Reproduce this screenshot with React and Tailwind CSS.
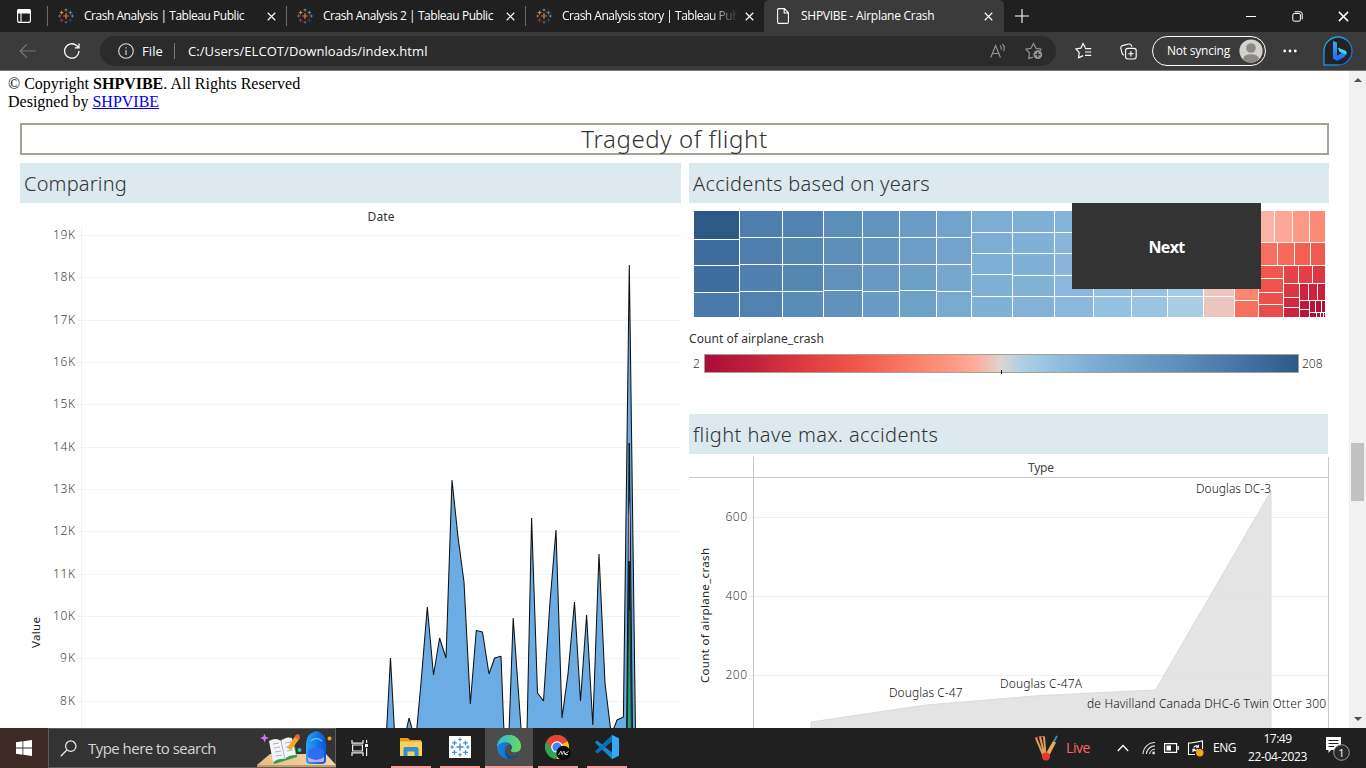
import React from "react";

const TABLEAU_MARKS = [
  [8, 8, 2.9, "#e8762d", 1.2],
  [3.6, 4.6, 1.9, "#eb9129", 1],
  [12.4, 4.6, 1.9, "#5b879b", 1],
  [3.6, 12.2, 1.9, "#c72037", 1],
  [12.4, 12.2, 1.9, "#1f457e", 1],
  [8, 2, 1.5, "#7099a5", 0.9],
  [8, 14.2, 1.5, "#5b6591", 0.9],
  [1.7, 8, 1.5, "#59879b", 0.9],
  [14.3, 8, 1.5, "#7b7fb0", 0.9],
];

function TableauMark({ className = "", mono }) {
  return (
    <svg viewBox="0 0 16 16" className={className} fill="none">
      {TABLEAU_MARKS.map(([x, y, r, color, w], i) => (
        <path key={i} d={`M${x - r} ${y}H${x + r}M${x} ${y - r}V${y + r}`} stroke={mono || color} strokeWidth={w} />
      ))}
    </svg>
  );
}

function CloseIcon({ className = "size-[9px]" }) {
  return (
    <svg viewBox="0 0 10 10" className={className} stroke="#fff" strokeWidth="1.3" fill="none">
      <path d="M.8.8L9.2 9.2M9.2.8L.8 9.2" />
    </svg>
  );
}

function Tab({ title, tracking, fade }) {
  return (
    <div className="mt-[6px] flex h-5 w-[239px] items-center border-l border-[#6a6a6a] pl-[10px]">
      <TableauMark className="size-4 shrink-0" />
      <span
        className={`ml-[10px] w-[180px] overflow-hidden whitespace-nowrap text-[12px] leading-4 text-white ${tracking} ${
          fade ? "[mask-image:linear-gradient(to_right,#000_82%,transparent_98%)]" : ""
        }`}
      >
        {title}
      </span>
      <CloseIcon className="ml-[3px] size-[9px]" />
    </div>
  );
}

function TabStrip() {
  return (
    <div className="flex h-8 bg-[#202020]">
      <div className="flex w-[47px] items-center pl-[17px]">
        <svg viewBox="0 0 14 14" className="size-[14px]" fill="none" stroke="#fff" strokeWidth="1.1">
          <rect x=".6" y=".6" width="12.8" height="12.8" rx="2" />
          <path d="M.6 1.5Q.6.6 2 .6H12Q13.4.6 13.4 2V4H.6Z" fill="#fff" />
          <path d="M4 4V13.4" />
        </svg>
      </div>
      <Tab title="Crash Analysis | Tableau Public" tracking="tracking-[-0.47px]" />
      <Tab title="Crash Analysis 2 | Tableau Public" tracking="tracking-[-0.44px]" />
      <Tab title="Crash Analysis story | Tableau Public" tracking="tracking-[-0.5px]" fade />
      <div className="flex w-[240px] items-center rounded-t-[5px] bg-[#3b3b3b] pl-[13px]">
        <svg viewBox="0 0 12 16" className="h-4 w-3" fill="none" stroke="#fff" strokeWidth="1.1">
          <path d="M2 .6H7.400L11.400 4.800V14Q11.400 15.400 10 15.400H2Q.6 15.400.6 14V2Q.6.6 2 .6ZM7.200.8V5H11.200" />
        </svg>
        <span className="ml-[12px] w-[183px] whitespace-nowrap text-[12px] leading-4 tracking-[-0.26px] text-white">
          SHPVIBE - Airplane Crash
        </span>
        <CloseIcon />
      </div>
      <div className="flex flex-1 items-center pl-[11px]">
        <svg viewBox="0 0 14 14" className="size-[14px]" stroke="#fff" strokeWidth="1.1">
          <path d="M7 0V14M0 7H14" />
        </svg>
      </div>
      <div className="flex items-center pr-[17px]">
        <svg viewBox="0 0 10 10" className="mr-[36px] size-[10px]" stroke="#fff" strokeWidth="1">
          <path d="M0 5.5H10" />
        </svg>
        <svg viewBox="0 0 11 11" className="mr-[35px] size-[11px]" fill="none" stroke="#fff" strokeWidth="1">
          <rect x=".8" y="2.5" width="7.6" height="7.7" rx="1.4" />
          <path d="M2.6.8H8Q10.2.8 10.2 3V8.4" />
        </svg>
        <CloseIcon className="size-[11px]" />
      </div>
    </div>
  );
}

function Toolbar() {
  return (
    <div className="flex h-[39px] items-center border-b border-[#777] bg-[#3b3b3b]">
      <svg viewBox="0 0 18 16" className="ml-[19px] h-4 w-[18px]" fill="none" stroke="#777" strokeWidth="1.2">
        <path d="M17 8H1.5M8 1.2L1.2 8L8 14.8" />
      </svg>
      <svg viewBox="0 0 16 16" className="ml-[27px] size-4" fill="none" stroke="#fff" strokeWidth="1.3">
        <path d="M15 8A7.2 7.2 0 1 1 12.6 2.6L14.8 4.6M15 .6V4.8H10.8" />
      </svg>
      <div className="ml-5 flex h-[30px] w-[956px] items-center rounded-full bg-[#2b2b2b] pl-[18px] pr-[13px] text-white">
        <svg viewBox="0 0 16 16" className="size-4" fill="none" stroke="#ddd" strokeWidth="1.1">
          <circle cx="8" cy="8" r="7.3" />
          <path d="M8 7V12M8 4.2V5.6" />
        </svg>
        <span className="ml-2 w-8 text-[13px] leading-4 tracking-[0.1px]">File</span>
        <span className="h-4 w-px bg-[#777]" />
        <span className="ml-[13px] text-[13px] leading-4 tracking-[0.07px]">C:/Users/ELCOT/Downloads/index.html</span>
        <svg viewBox="0 0 16 16" className="ml-auto size-4" fill="none" stroke="#999" strokeWidth="1.1">
          <path d="M.8 14.5L5.6 2.5L10.4 14.5M2.5 10.5H8.8M10 2.4Q11.800 4 11 6.600M12.400.8Q15.400 3.800 13.600 8" />
        </svg>
        <svg viewBox="0 0 18 18" className="ml-[19px] size-[18px]" fill="none" stroke="#999" strokeWidth="1.1">
          <path d="M8 15.2L3.8 16.4L4.4 11L1 7.2L6 6.2L8.5 1.5L11 6.2L16 7.2L15 8.6" />
          <circle cx="12.8" cy="12.6" r="4.4" fill="#999" stroke="none" />
          <path d="M12.8 10V15.2M10.2 12.6H15.4" stroke="#2b2b2b" strokeWidth="1.3" />
        </svg>
      </div>
      <svg viewBox="0 0 18 18" className="ml-[19px] size-[18px]" fill="none" stroke="#fff" strokeWidth="1.2">
        <path d="M10.4 5.8L8 1.5L5.8 6.2L1 7L4.2 10.6L3.6 15.8L8.2 13.6M10 6.6H16.2M10 10H16.2M10 13.4H16.2" />
      </svg>
      <svg viewBox="0 0 17 17" className="ml-[27px] size-[17px]" fill="none" stroke="#fff" strokeWidth="1.1">
        <rect x="5.6" y="5.4" width="10.6" height="10.6" rx="2.2" />
        <path d="M10.900 8V13.400M8.200 10.700H13.600M4 12.200Q2.400 11.600 2 10L.8 5.200Q.6 3.200 2.400 2.600L8.600 1Q10.800.6 11.600 2.800L12 3.800" />
      </svg>
      <div className="ml-[15px] flex h-[30px] w-[114px] items-center justify-end rounded-full border border-white pr-[2px]">
        <span className="mr-[9px] whitespace-nowrap text-[12px] leading-4 tracking-[-0.22px] text-white">Not syncing</span>
        <svg viewBox="0 0 24 24" className="size-6">
          <clipPath id="avatar"><circle cx="12" cy="12" r="11.4" /></clipPath>
          <circle cx="12" cy="12" r="11.6" fill="#d5d2ce" />
          <circle cx="12" cy="9" r="4.8" fill="#8d8985" />
          <ellipse cx="12" cy="20" rx="8" ry="4.8" fill="#8d8985" clipPath="url(#avatar)" />
        </svg>
      </div>
      <svg viewBox="0 0 14 4" className="ml-[17px] h-1 w-[14px]" fill="#fff">
        <circle cx="1.7" cy="2" r="1.4" /><circle cx="7" cy="2" r="1.4" /><circle cx="12.3" cy="2" r="1.4" />
      </svg>
      <svg viewBox="0 0 32 32" className="ml-[25px] size-8">
        <defs>
          <linearGradient id="bing" x1="0" x2="1" y1="0" y2="1"><stop stopColor="#20b6e8" /><stop offset="1" stopColor="#1e5fe0" /></linearGradient>
          <linearGradient id="bb" x1="0" x2="0" y1="0" y2="1"><stop stopColor="#35a8f8" /><stop offset="1" stopColor="#2469ee" /></linearGradient>
        </defs>
        <path d="M2 30V16A14 14 0 1 1 16 30Z" fill="#232323" stroke="url(#bing)" strokeWidth="1.3" />
        <path d="M11 6L15 7.6V20.5L20 18L17.5 16.8L16 12.8L24 16Q25.6 20 21.5 22.4L15 26L11 23.5Z" fill="url(#bb)" />
        <path d="M16 12.8L24 16Q25 18.2 24.4 19.6L17.5 16.8Z" fill="#3bd5f5" />
      </svg>
    </div>
  );
}

const GRID_LEFT = [235, 277, 320, 362, 404, 447, 489, 531, 574, 616, 658, 701];

function ComparingChart() {
  return (
    <svg viewBox="20 203 661 525" className="block h-[525px] w-[661px] font-['Noto_Sans',sans-serif]">
      <g shapeRendering="crispEdges" fill="#f2f2f2">
        {GRID_LEFT.map((y) => <rect key={y} x="77" y={y} width="604" height="1" />)}
        <rect x="81" y="226" width="1" height="502" />
      </g>
      <g fontSize="12" fontWeight="300" fill="#444">
        {GRID_LEFT.map((y, i) => (
          <text key={y} x={i < 10 ? 53 : 60} y={y + 4} textLength={i < 10 ? 22 : 15}>{`${19 - i}K`}</text>
        ))}
      </g>
      <text x="367.5" y="221" fontSize="12" textLength="27" fill="#333">Date</text>
      <text transform="translate(40 648) rotate(-90)" fontSize="11.5" textLength="31" fill="#222">Value</text>
      <path
        d="M386.5 732L390.5 658L394.5 732L406 732L409 718L413 732L416.5 732L421 683L427.3 607L433.5 675L439.6 638L446 658L452 480L458 537L464 582L470.3 704L476.3 630.5L482.5 632L489 674L494.6 658L501 656.3L504 732L509 732L513.2 618L521 728L527 732L531.6 518L537.5 693L543.5 701L550 602L556 530L562 718L568 674L574.5 602L580.5 701L586.6 615L592.8 725L599 554L605 683L610.7 730L614 728L617 720L623.4 717L629.3 265L635.5 732Z"
        fill="#6cace4" stroke="#111" strokeWidth="1.05" strokeLinejoin="bevel"
      />
      <path d="M626.6 732L629.3 443L632.5 732Z" fill="#355878" stroke="#111" strokeWidth="1" strokeLinejoin="bevel" />
      <path d="M628.6 562V516L629.3 500L630 516V562Z" fill="#c99aae" />
      <path d="M627.300 732L629.300 561L631.400 732Z" fill="#2ba07f" stroke="#111" strokeWidth=".7" strokeLinejoin="bevel" />
      <path d="M629.300 443V490M629.300 561V610" stroke="#111" strokeWidth="1" />
    </svg>
  );
}

/* [x0, x1, [[y0, y1, fill], ...]]: x1 is the gutter column, y1 the last filled row */
const TREEMAP = [
  [694, 739, [[211, 238, "#2c5985"], [240, 264, "#3e6b9d"], [266, 291, "#3f6d9f"], [293, 316, "#4a7aac"]]],
  [740, 782, [[211, 236, "#4e7dae"], [238, 263, "#4e7dae"], [265, 290, "#5080b0"], [292, 316, "#5181b1"]]],
  [783, 823, [[211, 236, "#5282b1"], [238, 263, "#5486b2"], [265, 290, "#5486b2"], [292, 316, "#5a8cb8"]]],
  [824, 862, [[211, 236, "#5c8eba"], [238, 263, "#5c8eba"], [265, 289, "#5f91bb"], [291, 316, "#6092bb"]]],
  [863, 899, [[211, 236, "#6293bd"], [238, 263, "#6596c0"], [265, 290, "#6999c3"], [292, 316, "#6a9bc4"]]],
  [900, 936, [[211, 236, "#6b9cc6"], [238, 263, "#6c9dc6"], [265, 289, "#6da0c7"], [291, 316, "#6ea1c8"]]],
  [937, 971, [[211, 236, "#73a3cc"], [238, 263, "#73a3cc"], [265, 290, "#76a7cf"], [292, 316, "#78a9d0"]]],
  [972, 1012, [[211, 231, "#7dacd4"], [233, 252, "#7dacd4"], [254, 273, "#7eafd5"], [275, 295, "#7eafd5"], [297, 316, "#7fb0d5"]]],
  [1013, 1054, [[211, 231, "#7fafd4"], [233, 252, "#80b0d5"], [254, 274, "#80b0d5"], [276, 295, "#82b1d6"], [297, 316, "#83b1d7"]]],
  [1055, 1093, [[211, 231, "#86b3d9"], [233, 252, "#88b4da"], [254, 274, "#8ab5db"], [276, 295, "#8cb7dc"], [297, 316, "#8cb8dc"]]],
  [1094, 1131, [[211, 295, "#93bfe0"], [297, 316, "#95c1e1"]]],
  [1132, 1167, [[211, 295, "#97c2e2"], [297, 316, "#99c4e2"]]],
  [1168, 1203, [[211, 295, "#a4cae4"], [297, 316, "#abcde4"]]],
  [1204, 1234, [[211, 295, "#ecc6be"], [297, 316, "#eac6be"]]],
  [1235, 1258, [[211, 299, "#fb8771"], [301, 316, "#f7705f"]]],
  [1240, 1274, [[211, 241, "#f9b4a8"]]],
  [1275, 1292, [[211, 241, "#ffa699"]]],
  [1293, 1309, [[211, 241, "#fe9784"]]],
  [1310, 1325, [[211, 241, "#fb8a77"]]],
  [1259, 1277, [[243, 264, "#f7705f"]]],
  [1278, 1294, [[243, 264, "#f56a58"]]],
  [1295, 1310, [[243, 264, "#f26052"]]],
  [1311, 1325, [[243, 264, "#ef5c4f"]]],
  [1259, 1283, [[266, 277, "#f0584d"], [279, 291, "#ef544c"], [293, 303, "#ed504a"], [305, 316, "#ea4c49"]]],
  [1284, 1298, [[266, 282, "#e34246"]]],
  [1299, 1312, [[266, 282, "#e24046"]]],
  [1313, 1325, [[266, 282, "#dd3742"]]],
  [1284, 1299, [[284, 296, "#dc3643"], [298, 306, "#d02a3e"], [308, 316, "#cd263c"]]],
  [1300, 1308, [[284, 299, "#cd243b"]]],
  [1309, 1317, [[284, 299, "#cc223b"]]],
  [1318, 1325, [[284, 299, "#c8203a"]]],
  [1300, 1309, [[301, 308, "#bf1738"], [310, 316, "#bb1437"]]],
  [1310, 1315, [[301, 311, "#b91336"]]],
  [1316, 1321, [[301, 311, "#b51136"]]],
  [1322, 1325, [[301, 311, "#b21036"]]],
  [1310, 1316, [[313, 316, "#b00f35"]]],
  [1317, 1320, [[313, 316, "#b00f35"]]],
  [1321, 1323, [[313, 316, "#ae0e35"]]],
  [1324, 1325, [[313, 316, "#ac0d34"]]],
];

function Treemap() {
  return (
    <svg viewBox="689 203 640 122" className="block h-[122px] w-[640px]" shapeRendering="crispEdges">
      {TREEMAP.flatMap(([x0, x1, cells]) =>
        cells.map(([y0, y1, fill]) => (
          <rect key={`${x0}-${y0}`} x={x0} y={y0} width={x1 - x0} height={y1 - y0 + 1} fill={fill} />
        ))
      )}
    </svg>
  );
}

function Legend() {
  return (
    <div className="h-[89px] pt-[6px] font-['Noto_Sans',sans-serif] text-[12px] text-[#333]">
      <div className="leading-4 tracking-[0.06px]">Count of airplane_crash</div>
      <div className="mt-[7px] flex items-center font-light leading-[18px]">
        <span className="w-[15px] pl-1">2</span>
        <div className="flex h-[19px] w-[595px] items-end justify-center border border-[#a3a393] bg-[linear-gradient(90deg,#a90c38_0%,#c1203b_8%,#e03b42_17%,#f1584d_26%,#fa7964_34%,#ff9682_41%,#ffab9b_45.5%,#dcd5d0_50%,#b2d0e4_53%,#97c3e2_58%,#82b0d7_64%,#74a6ce_69%,#5c8cb8_81%,#426fa2_92%,#2d5a85_100%)]">
          <span className="-mb-[2px] h-1 w-px bg-black" />
        </div>
        <span className="pl-[3px]">208</span>
      </div>
    </div>
  );
}

function FlightChart() {
  return (
    <svg viewBox="689 454 640 274" className="block h-[274px] w-[640px] font-['Noto_Sans',sans-serif]">
      <g shapeRendering="crispEdges">
        {[517, 596, 675].map((y) => <rect key={y} x="749" y={y} width="579" height="1" fill="#f0f0f0" />)}
        <rect x="689" y="477" width="639" height="1" fill="#c8c8c8" />
        <rect x="753" y="457" width="1" height="271" fill="#c8c8c8" />
        <rect x="1328" y="457" width="1" height="271" fill="#c8c8c8" />
      </g>
      <path d="M811 730V722L926 705L1041 695.5L1155.5 690L1271 491V730Z" fill="#dfdfdf" fillOpacity=".85" stroke="#dadada" />
      <g fontSize="12" fontWeight="300" fill="#444">
        <text x="725.5" y="521" textLength="21.5">600</text>
        <text x="725.5" y="600" textLength="21.5">400</text>
        <text x="725.5" y="679" textLength="21.5">200</text>
      </g>
      <text x="1028" y="472" fontSize="12" textLength="26" fill="#444">Type</text>
      <g fontSize="12" fill="#111" fontWeight="300">
        <text x="1196" y="493" textLength="75">Douglas DC-3</text>
        <text x="889" y="697" textLength="73.5">Douglas C-47</text>
        <text x="1000" y="688" textLength="82">Douglas C-47A</text>
        <text x="1087" y="708" textLength="239">de Havilland Canada DHC-6 Twin Otter 300</text>
      </g>
      <text transform="translate(709 683) rotate(-90)" fontSize="11.5" textLength="135" fill="#222">Count of airplane_crash</text>
    </svg>
  );
}

function PanelTitle({ children, tracking, width = "w-full" }) {
  return (
    <h2 className={`h-10 bg-[#dce9ee] pl-1 font-['Noto_Sans',sans-serif] text-[20px] font-light leading-[42px] text-[#333] ${tracking} ${width}`}>
      {children}
    </h2>
  );
}

function Page() {
  return (
    <main className="relative flex h-[657px] bg-white">
      <div className="flex w-[1349px] flex-col overflow-hidden">
        <footer className="pl-2 pt-1 font-['Liberation_Serif',serif] text-[16px] leading-[18px] text-black">
          <div>© Copyright <strong>SHPVIBE</strong>. All Rights Reserved</div>
          <div>Designed by <a className="text-[#0000ee] underline" href="#top">SHPVIBE</a></div>
        </footer>
        <h1 className="ml-5 mt-3 h-8 w-[1309px] border-2 border-[#a3a393] text-center font-['Noto_Sans',sans-serif] text-[24px] font-light leading-[28px] tracking-[0.6px] text-[#333]">
          Tragedy of flight
        </h1>
        <div className="ml-5 mt-2 flex gap-2">
          <section className="w-[661px]">
            <PanelTitle tracking="tracking-[0.18px]">Comparing</PanelTitle>
            <ComparingChart />
          </section>
          <section className="w-[640px]">
            <PanelTitle tracking="tracking-[0.3px]">Accidents based on years</PanelTitle>
            <Treemap />
            <Legend />
            <PanelTitle tracking="tracking-[0.44px]" width="w-[639px]">flight have max. accidents</PanelTitle>
            <FlightChart />
          </section>
        </div>
      </div>
      <div className="flex w-[17px] flex-col items-center bg-[#f0f0f0] pb-[7px] pt-[7px]">
        <svg viewBox="0 0 8 4" className="h-1 w-2" fill="#505050"><path d="M0 4L4 0L8 4Z" /></svg>
        <div className="mt-[361px] h-[58px] w-[13px] bg-[#c1c1c1]" />
        <svg viewBox="0 0 8 4" className="mt-auto h-1 w-2" fill="#505050"><path d="M0 0L4 4L8 0Z" /></svg>
      </div>
      <button className="absolute left-[1072px] top-[132px] h-[86px] w-[189px] bg-[#333] pt-px text-[16px] font-bold tracking-[-0.66px] text-white">
        Next
      </button>
    </main>
  );
}

function SearchArt() {
  return (
    <svg viewBox="257 729 79 38" className="h-[38px] w-[79px]">
      <defs>
        <linearGradient id="pack" x1="0" x2="1"><stop stopColor="#2aa2f5" /><stop offset="1" stopColor="#0a55d8" /></linearGradient>
        <linearGradient id="desk" x1="0" x2="1"><stop stopColor="#e8bd85" /><stop offset="1" stopColor="#f3d7ae" /></linearGradient>
      </defs>
      <path d="M257 767V765L270 754H326L336 765V767Z" fill="url(#desk)" />
      <path d="M257 765H336V767H257Z" fill="#c79a68" />
      <path d="M264.5 733.5L265.7 736.8L269 738L265.7 739.2L264.5 742.5L263.3 739.2L260 738L263.3 736.8Z" fill="#d678f5" />
      <path d="M270 743L283 739L294 740L297 757L284 761L274 764Z" fill="#2f9e4b" />
      <path d="M269 741Q276 737 281 741Q286 736 292 738L296 755Q288 755 285 759Q279 758 273 762Z" fill="#f4f4f8" />
      <path d="M281 741L285 759M273 744L279 743M274 748L280 747M275 752L281 751M276 756L282 755M285 743L291 742M286 747L292 746M287 751L293 750" stroke="#a8a8b8" strokeWidth=".9" fill="none" />
      <path d="M287 748L296 735L300 738L291 750Z" fill="#f8a62a" />
      <path d="M294.5 737L297 734Q299 734 300 736L298.5 740Z" fill="#f0603f" />
      <circle cx="299.5" cy="750" r="2" fill="#35b9c0" />
      <path d="M312 735Q316 729 321 735" stroke="#1677dd" strokeWidth="2" fill="none" />
      <path d="M306 746Q306 732 316 732Q326 732 326 746V760Q326 764 322 764H310Q306 764 306 760Z" fill="url(#pack)" />
      <path d="M308 752Q308 748 316 748Q324 748 324 752V760Q324 762 321 762H311Q308 762 308 760Z" fill="#2f6df0" />
      <path d="M308 757Q316 763 324 757V760Q324 762 321 762H311Q308 762 308 760Z" fill="#c9a7fa" />
      <path d="M311 741Q316 736 322 741" stroke="#58c2ff" strokeWidth="1.5" fill="none" />
      <circle cx="329.5" cy="738.5" r="2" fill="#f5a70d" />
    </svg>
  );
}

function TaskButton({ wide, active, children }) {
  return (
    <div
      className={`flex h-10 items-center justify-center border-b-2 border-[#f59b9b] ${wide ? "w-12" : "w-10"} ${
        active ? "bg-[#4c4c4c]" : ""
      }`}
    >
      {children}
    </div>
  );
}

function Taskbar() {
  return (
    <div className="flex h-10 bg-[#212020] text-white">
      <div className="flex w-12 items-center justify-center bg-[#3c2b27]">
        <svg viewBox="0 0 16 16" className="size-4" fill="#fff">
          <path d="M0 2.3L6.5 1.3V7.6H0ZM7.3 1.2L16 0V7.6H7.3ZM0 8.4H6.5V14.7L0 13.7ZM7.3 8.4H16V16L7.3 14.8Z" />
        </svg>
      </div>
      <div className="flex w-72 items-center border border-[#5e5e5e] bg-[#333]">
        <svg viewBox="0 0 18 18" className="ml-[11px] size-[17px]" fill="none" stroke="#eee" strokeWidth="1.3">
          <circle cx="11.4" cy="6.5" r="5.5" />
          <path d="M7.3 10.6L.8 17.2" />
        </svg>
        <span className="ml-[11px] text-[15px] leading-5 tracking-[-0.53px] text-[#d6d6d6]">Type here to search</span>
        <div className="-mr-px ml-auto"><SearchArt /></div>
      </div>
      <div className="flex w-[55px] items-center pl-[15px]">
        <svg viewBox="0 0 18 16" className="h-4 w-[18px]" fill="none" stroke="#eee" strokeWidth="1.2">
          <path d="M1 0V3.2H12V0M1 16V12.8H12V16M1.600 5H11.400V11H1.600ZM15.600 0V3M15.600 8V16" />
          <path d="M14 4H17V7H14Z" fill="#fff" stroke="none" />
        </svg>
      </div>
      <TaskButton>
        <svg viewBox="0 0 22 20" className="h-5 w-[22px]">
          <path d="M0 1H8L10 3H21V6H0Z" fill="#e0a11b" />
          <path d="M0 4.5H22V19H0Z" fill="#fbd257" />
          <path d="M3.5 19V11.5Q3.5 10 5 10H17Q18.5 10 18.5 11.5V19H14.5V14.5H7.5V19Z" fill="#2f8fdc" />
        </svg>
      </TaskButton>
      <div className="ml-[9px]">
        <TaskButton>
          <div className="flex h-[22px] w-[22px] items-center justify-center bg-white">
            <TableauMark className="size-5" mono="#4a8fc4" />
          </div>
        </TaskButton>
      </div>
      <div className="ml-[5px]">
        <TaskButton wide active>
          <svg viewBox="0 0 24 24" className="size-6">
            <defs>
              <linearGradient id="edgeTop" x1="0" x2="1" y1=".3" y2=".4"><stop stopColor="#31b5e5" /><stop offset="1" stopColor="#69dc55" /></linearGradient>
              <linearGradient id="edgeLow" x1="0" x2="1"><stop stopColor="#1785df" /><stop offset="1" stopColor="#155caa" /></linearGradient>
            </defs>
            <path d="M0 12A12 12 0 0 1 24 11.5Q24 17 18 17.2Q13.5 17.2 14 15Q15.5 13.5 15 11.5Q13.5 7.5 8.5 7.5Q3 7.5 0 12Z" fill="url(#edgeTop)" />
            <path d="M0 12Q3 7.3 8 7.4Q12 7.6 14 10.2Q9 9.5 8.3 14Q8.3 20 15 21.3Q19 21.5 22 18.5Q18.5 24 12 24Q1 23.5 0 12Z" fill="url(#edgeLow)" />
            <path d="M8.3 14Q8.3 20 15 21.3Q19 21.5 22 18.5Q18.5 24 12 24Q7 20 8.3 14Z" fill="#114a8b" />
          </svg>
        </TaskButton>
      </div>
      <div className="ml-[5px]">
        <TaskButton>
          <svg viewBox="0 0 26 26" className="mt-px size-[26px]">
            <path d="M12 12L1.6 6A12 12 0 0 1 22.4 6Z" fill="#e84335" />
            <path d="M12 12L22.4 6A12 12 0 0 1 12 24Z" fill="#fbc116" />
            <path d="M12 12L12 24A12 12 0 0 1 1.6 6Z" fill="#34a353" />
            <path d="M1.6 6A12 12 0 0 1 22.4 6H12A6 6 0 0 0 6.8 15Z" fill="#e84335" />
            <circle cx="12" cy="12" r="5.8" fill="#fff" /><circle cx="12" cy="12" r="4.6" fill="#4285f4" />
            <circle cx="18.5" cy="18" r="7.2" fill="#090909" />
            <path d="M13.5 20L16 16L17 19.5L19 16L19.6 19L23.6 16.5M20 19.5H23" stroke="#ddd" strokeWidth=".9" fill="none" />
          </svg>
        </TaskButton>
      </div>
      <div className="ml-[9px]">
        <TaskButton>
          <svg viewBox="0 0 24 24" className="size-6">
            <path d="M17 0L24 3.5V20.5L17 24L2 9.5L0 7.5L2 5.5L17 17.5Z" fill="#1489d1" />
            <path d="M17 0V6.5L2.5 18.5L0 16.5L2 14.5Z" fill="#0a6db5" />
            <path d="M17 0L24 3.5V20.5L17 24Z" fill="#35aaf2" />
          </svg>
        </TaskButton>
      </div>
      <div className="ml-auto flex items-center pr-[16px]">
        <svg viewBox="0 0 24 26" className="h-[26px] w-6">
          <path d="M2 3L10 22M6 2L10.5 20M10 2L11.5 20" stroke="#df9c57" strokeWidth="2" />
          <path d="M1 3L4 2M5 1.5H11" stroke="#d3543e" strokeWidth="1.2" />
          <path d="M19 6L22 7.5L14.5 22L11 20Z" fill="#eea85f" />
          <path d="M20 6.5L23 .8" stroke="#3e8ec4" strokeWidth="1.8" />
          <circle cx="12" cy="21.5" r="4" fill="#e3372d" />
        </svg>
        <span className="ml-2 w-[51px] text-[14px] leading-5 tracking-[-0.42px] text-[#ff6464]">Live</span>
        <svg viewBox="0 0 12 8" className="h-2 w-3" fill="none" stroke="#fff" strokeWidth="1.3"><path d="M.8 7L6 1.5L11.2 7" /></svg>
        <svg viewBox="0 0 14 14" className="ml-[13px] size-[14px]" fill="none" stroke="#ddd" strokeWidth="1.1">
          <path d="M1 13A12 12 0 0 1 13 1.5M4.4 13A8.6 8.6 0 0 1 13 4.9M7.6 13A5.4 5.4 0 0 1 13 8.3" />
          <circle cx="11.6" cy="12" r="1.4" fill="#ddd" stroke="none" />
        </svg>
        <svg viewBox="0 0 15 10" className="ml-[8px] h-[10px] w-[15px]" fill="none" stroke="#fff" strokeWidth="1.2">
          <path d="M.6.6H12.6V9.4H.6ZM14.2 3V7" /><path d="M2.5 2.5H7V7.5H2.5Z" fill="#fff" stroke="none" />
        </svg>
        <svg viewBox="0 0 17 17" className="ml-[8px] size-[17px]" fill="none" stroke="#fff" strokeWidth="1.1">
          <path d="M6 3H1.500V14.500H8M4 3L15.500 1V9M6.500 7.500Q9 4.500 11.500 7M11.500 4.800V7.200H9M11 9Q8.500 12 6 9.500M6 12V9.300H8.400" />
          <circle cx="12.800" cy="12.800" r="3.700" fill="#f7a21b" stroke="none" />
        </svg>
        <span className="ml-[9px] w-[35px] text-[12px] leading-4 tracking-[-0.48px]">ENG</span>
        <div className="w-[59px] whitespace-nowrap text-center text-[12px] leading-[18px]">
          <div className="tracking-[-0.52px]">17:49</div>
          <div className="tracking-[-0.36px]">22-04-2023</div>
        </div>
        <svg viewBox="0 0 25 26" className="ml-[18px] mt-1 h-[26px] w-[25px]">
          <path d="M1 0H16V13H6L3.500 16V13H1Z" fill="#fff" />
          <path d="M3.500 3.500H13.500M3.500 6.500H13.500M3.500 9.500H9" stroke="#222" />
          <circle cx="16.500" cy="15.500" r="7.800" fill="#2a2a2a" stroke="#aaa" strokeWidth=".9" />
          <text x="16.500" y="19.500" fontSize="11" fill="#fff" textAnchor="middle">1</text>
        </svg>
      </div>
    </div>
  );
}

export default function App() {
  return (
    <div className="flex h-[768px] w-[1366px] flex-col overflow-hidden bg-[#202020] font-['Open_Sans',sans-serif]">
      <TabStrip />
      <Toolbar />
      <Page />
      <Taskbar />
    </div>
  );
}
